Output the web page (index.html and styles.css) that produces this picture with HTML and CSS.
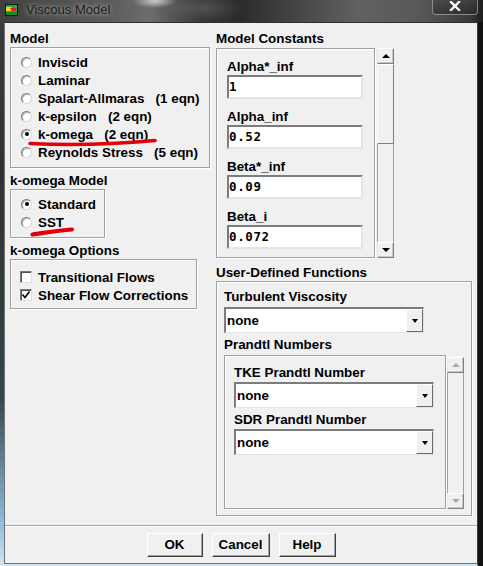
FILE: index.html
```html
<!DOCTYPE html>
<html lang="en">
<head>
  <meta charset="UTF-8">
  <title>Viscous Model</title>
  <link rel="stylesheet" href="styles.css">
</head>
<body>
  <div class="window">
    <div class="titlebar">
      <svg class="app-icon" width="13" height="12" viewBox="0 0 13 12">
        <rect width="13" height="12" fill="#111"/>
        <rect x="1" y="1" width="11" height="10" fill="#2aa83a"/>
        <path d="M1 3 h5 l2 2 l-2 2 h-5z" fill="#f0dc10"/>
        <path d="M5 4 h6 v3 h-4z" fill="#d8261c"/>
        <rect x="1" y="8" width="11" height="3" fill="#1c8a2c"/>
      </svg>
      <span class="title">Viscous Model</span>
      <div class="close-btn">
        <svg width="12" height="10" viewBox="0 0 12 10">
          <path d="M2 1 L10 9 M10 1 L2 9" stroke="#fff" stroke-width="2.4" stroke-linecap="square"/>
        </svg>
      </div>
    </div>

    <div class="client">
      <div class="panels">
        <div class="col-left">
          <div class="group-label">Model</div>
          <div class="group model-box">
            <div class="opt"><span class="radio"></span>Inviscid</div>
            <div class="opt"><span class="radio"></span>Laminar</div>
            <div class="opt"><span class="radio"></span>Spalart-Allmaras   (1 eqn)</div>
            <div class="opt"><span class="radio"></span>k-epsilon   (2 eqn)</div>
            <div class="opt"><span class="radio on"></span>k-omega   (2 eqn)</div>
            <div class="opt"><span class="radio"></span>Reynolds Stress   (5 eqn)</div>
          </div>

          <div class="group-label">k-omega Model</div>
          <div class="group komega-box">
            <div class="opt"><span class="radio on"></span>Standard</div>
            <div class="opt"><span class="radio"></span>SST</div>
          </div>

          <div class="group-label">k-omega Options</div>
          <div class="group options-box">
            <div class="opt"><span class="check"></span>Transitional Flows</div>
            <div class="opt"><span class="check"><svg width="10" height="10" viewBox="0 0 10 10"><path d="M1.5 4.5 L4 7.5 L8.5 1.5" fill="none" stroke="#000" stroke-width="1.6"/></svg></span>Shear Flow Corrections</div>
          </div>
        </div>

        <div class="col-right">
          <div class="group-label">Model Constants</div>
          <div class="constants-row">
            <div class="group constants-box">
              <div class="field">
                <div class="field-label">Alpha*_inf</div>
                <div class="field-input">1</div>
              </div>
              <div class="field">
                <div class="field-label">Alpha_inf</div>
                <div class="field-input">0.52</div>
              </div>
              <div class="field">
                <div class="field-label">Beta*_inf</div>
                <div class="field-input">0.09</div>
              </div>
              <div class="field">
                <div class="field-label">Beta_i</div>
                <div class="field-input">0.072</div>
              </div>
            </div>
            <div class="vscroll constants-scroll">
              <div class="sb-btn up"></div>
              <div class="sb-thumb"></div>
              <div class="sb-track"></div>
              <div class="sb-btn down"></div>
            </div>
          </div>

          <div class="group-label udf-label">User-Defined Functions</div>
          <div class="group udf-box">
            <div class="field-label">Turbulent Viscosity</div>
            <div class="dropdown">
              <span class="dd-value">none</span>
              <span class="dd-btn"></span>
            </div>

            <div class="field-label prandtl-label">Prandtl Numbers</div>
            <div class="prandtl-row">
              <div class="group prandtl-box">
                <div class="field-label">TKE Prandtl Number</div>
                <div class="dropdown">
                  <span class="dd-value">none</span>
                  <span class="dd-btn"></span>
                </div>
                <div class="field-label sdr-label">SDR Prandtl Number</div>
                <div class="dropdown">
                  <span class="dd-value">none</span>
                  <span class="dd-btn"></span>
                </div>
              </div>
              <div class="vscroll prandtl-scroll disabled">
                <div class="sb-btn up"></div>
                <div class="sb-track"></div>
                <div class="sb-btn down"></div>
              </div>
            </div>
          </div>
        </div>
      </div>

      <div class="footer">
        <div class="btn btn-ok">OK</div>
        <div class="btn btn-cancel">Cancel</div>
        <div class="btn btn-help">Help</div>
      </div>
    </div>

    <!-- red pen strokes under the chosen model -->
    <svg class="marks" width="483" height="566" viewBox="0 0 483 566">
      <path d="M30 143.5 C 60 145, 110 144.5, 155 140.5" fill="none" stroke="#e3000b" stroke-width="3.6" stroke-linecap="round"/>
      <path d="M32.5 234.5 C 44 233, 56 230.5, 72 229.5" fill="none" stroke="#e3000b" stroke-width="4.2" stroke-linecap="round"/>
    </svg>
  </div>
</body>
</html>
```

FILE: styles.css
```css
* {
  box-sizing: border-box;
  margin: 0;
  padding: 0;
}

body {
  width: 483px;
  height: 566px;
  overflow: hidden;
  font-family: 'Liberation Sans', Arial, sans-serif;
  color: #000;
}

.window {
  position: relative;
  width: 483px;
  height: 566px;
  display: flex;
  flex-direction: column;
  background:
    linear-gradient(90deg, rgba(0, 0, 0, 0) 0, rgba(0, 0, 0, 0) 477px, #151515 478px, #0e0e0e 483px),
    linear-gradient(180deg, #3b3e3b 0, #2f322f 30%, #35444c 70%, #8dbbdb 92%, #d2e6f3 100%);
}

/* title bar */
.titlebar {
  height: 22px;
  display: flex;
  align-items: flex-start;
  padding-left: 5px;
  background:
    radial-gradient(ellipse 22px 7px at 155px 1px, rgba(225, 225, 225, 0.8), rgba(225, 225, 225, 0)),
    radial-gradient(ellipse 40px 12px at 205px 8px, rgba(255, 255, 255, 0.12), rgba(255, 255, 255, 0)),
    linear-gradient(90deg, #3d403d 0, #4b4d4b 40px, #5c5c5c 110px, #6d6d6d 150px, #3a3a3a 200px, #2b2b2b 240px, #474747 300px, #616161 360px, #585858 420px, #3a3a3a 470px, #1d1d1d 483px);
}

.app-icon {
  margin-top: 4px;
  flex: none;
}

.title {
  margin-left: 8px;
  margin-top: 2px;
  font-size: 13px;
  line-height: 16px;
  color: #1c1c1c;
  text-shadow: 0 0 4px rgba(225, 225, 225, 0.55), 0 0 9px rgba(225, 225, 225, 0.4);
}

.close-btn {
  margin-left: auto;
  margin-right: 5px;
  width: 46px;
  height: 15px;
  border: 1px solid rgba(200, 200, 200, 0.55);
  border-top: none;
  border-radius: 0 0 4px 4px;
  background: linear-gradient(180deg, rgba(70, 70, 70, 0.6), rgba(40, 40, 40, 0.6));
  display: flex;
  align-items: center;
  justify-content: center;
  padding-bottom: 2px;
}

/* dialog client area */
.client {
  margin-left: 4px;
  width: 474px;
  height: 542px;
  background: #f0f0f0;
  border: 1px solid #707070;
  border-top-color: #2e2e2e;
  border-right-color: #3a3a3a;
  display: flex;
  flex-direction: column;
}

.panels {
  flex: 1;
  display: flex;
  gap: 6px;
  padding: 8px 0 0 5px;
}

.col-left {
  width: 200px;
}

.col-right {
  width: 262px;
}

.group-label,
.field-label {
  height: 16px;
  line-height: 16px;
  font-size: 13.4px;
  font-weight: bold;
  white-space: nowrap;
}

.group + .group-label {
  margin-top: 5px;
}

.group {
  border: 1px solid #a0a0a0;
  box-shadow: inset 1px 1px 0 #fff, 1px 1px 0 #fff;
}

.opt {
  display: flex;
  align-items: center;
  height: 18px;
  font-size: 13.4px;
  font-weight: bold;
  white-space: pre;
}

.radio {
  position: relative;
  flex: none;
  width: 11px;
  height: 11px;
  margin-right: 6px;
  border-radius: 50%;
  background: #fff;
  border: 1px solid;
  border-color: #7a7a7a #d8d8d8 #d8d8d8 #7a7a7a;
  box-shadow: inset 1px 1px 0 #b8b8b8;
}

.radio.on::after {
  content: '';
  position: absolute;
  left: 2.5px;
  top: 2.5px;
  width: 4px;
  height: 4px;
  border-radius: 50%;
  background: #000;
}

.check {
  flex: none;
  width: 12px;
  height: 12px;
  margin-right: 6px;
  background: #fff;
  border: 1px solid;
  border-color: #7a7a7a #dedede #dedede #7a7a7a;
  box-shadow: inset 1px 1px 0 #505050;
  display: flex;
  align-items: center;
  justify-content: center;
}

.model-box {
  width: 200px;
  height: 121px;
  padding: 5px 0 0 10px;
}

.komega-box {
  width: 95px;
  height: 49px;
  padding: 5px 0 0 10px;
}

.options-box {
  width: 187px;
  height: 50px;
  padding: 8px 0 0 9px;
}

/* model constants */
.constants-row {
  display: flex;
  gap: 2px;
  margin-top: 1px;
}

.constants-box {
  width: 159px;
  height: 210px;
  overflow: hidden;
  padding: 10px 0 0 10px;
}

.field {
  margin-bottom: 10px;
}

.field-input {
  width: 136px;
  height: 24px;
  background: #fff;
  border: 2px solid;
  border-color: #7c7c7c #e4e4e4 #e4e4e4 #7c7c7c;
  font-family: 'DejaVu Sans Mono', 'Liberation Mono', monospace;
  font-weight: bold;
  font-size: 12.5px;
  letter-spacing: 0.6px;
  line-height: 20px;
}

/* scroll bars */
.vscroll {
  width: 17px;
  display: flex;
  flex-direction: column;
}

.constants-scroll {
  height: 210px;
}

.sb-btn {
  height: 16px;
  flex: none;
  background: #f0f0f0;
  border: 1px solid;
  border-color: #fff #808080 #808080 #e8e8e8;
  box-shadow: inset -1px -1px 0 #c8c8c8;
  display: flex;
  align-items: center;
  justify-content: center;
}

.sb-btn::before {
  content: '';
  width: 0;
  height: 0;
  border-left: 4px solid transparent;
  border-right: 4px solid transparent;
}

.sb-btn.up::before {
  border-bottom: 4px solid #000;
}

.sb-btn.down::before {
  border-top: 4px solid #000;
}

.disabled .sb-btn.up::before {
  border-bottom-color: #a8a8a8;
}

.disabled .sb-btn.down::before {
  border-top-color: #a8a8a8;
}

.sb-thumb {
  height: 80px;
  flex: none;
  background: #f0f0f0;
  border: 1px solid;
  border-color: #fff #808080 #808080 #fff;
}

.sb-track {
  flex: 1;
  border-left: 1px solid #a0a0a0;
  border-right: 1px solid #a0a0a0;
  background: #f0f0f0;
}

/* user-defined functions */
.udf-label {
  margin-top: 7px;
}

.udf-box {
  width: 256px;
  height: 235px;
  padding: 7px 0 0 7px;
}

.dropdown {
  width: 200px;
  height: 26px;
  margin-top: 2px;
  display: flex;
  align-items: stretch;
  background: #fff;
  border-top: 2px solid #7c7c7c;
  border-left: 2px solid #7c7c7c;
  border-bottom: 1px solid #e4e4e4;
  border-right: 1px solid #e4e4e4;
}

.dd-value {
  padding-left: 1px;
  line-height: 23px;
  font-size: 13.4px;
  font-weight: bold;
}

.dd-btn {
  margin-left: auto;
  width: 17px;
  background: #f0f0f0;
  border: 1px solid;
  border-color: #fff #6a6a6a #6a6a6a #fff;
  display: flex;
  align-items: center;
  justify-content: center;
}

.dd-btn::before {
  content: '';
  border-left: 3.5px solid transparent;
  border-right: 3.5px solid transparent;
  border-top: 4px solid #000;
}

.prandtl-label {
  margin-top: 4px;
}

.prandtl-row {
  display: flex;
  gap: 1px;
  margin-top: 2px;
}

.prandtl-box {
  width: 222px;
  height: 154px;
  padding: 9px 0 0 9px;
}

.prandtl-box .dropdown {
  margin-top: 1px;
}

.sdr-label {
  margin-top: 4px;
}

.prandtl-scroll {
  height: 152px;
  margin-top: 2px;
}

/* footer buttons */
.footer {
  height: 38px;
  flex: none;
  border-top: 1px solid #a0a0a0;
  box-shadow: inset 0 1px 0 #fff;
  display: flex;
  justify-content: center;
  gap: 9px;
  padding-top: 7px;
}

.btn {
  height: 24px;
  background: #f0f0f0;
  border: 1px solid;
  border-color: #fff #404040 #404040 #fff;
  box-shadow: inset -1px -1px 0 #a0a0a0;
  font-size: 13.4px;
  font-weight: bold;
  line-height: 21px;
  text-align: center;
}

.btn-ok {
  width: 56px;
}

.btn-cancel {
  width: 58px;
}

.btn-help {
  width: 57px;
}

.marks {
  position: absolute;
  left: 0;
  top: 0;
  pointer-events: none;
}
```
